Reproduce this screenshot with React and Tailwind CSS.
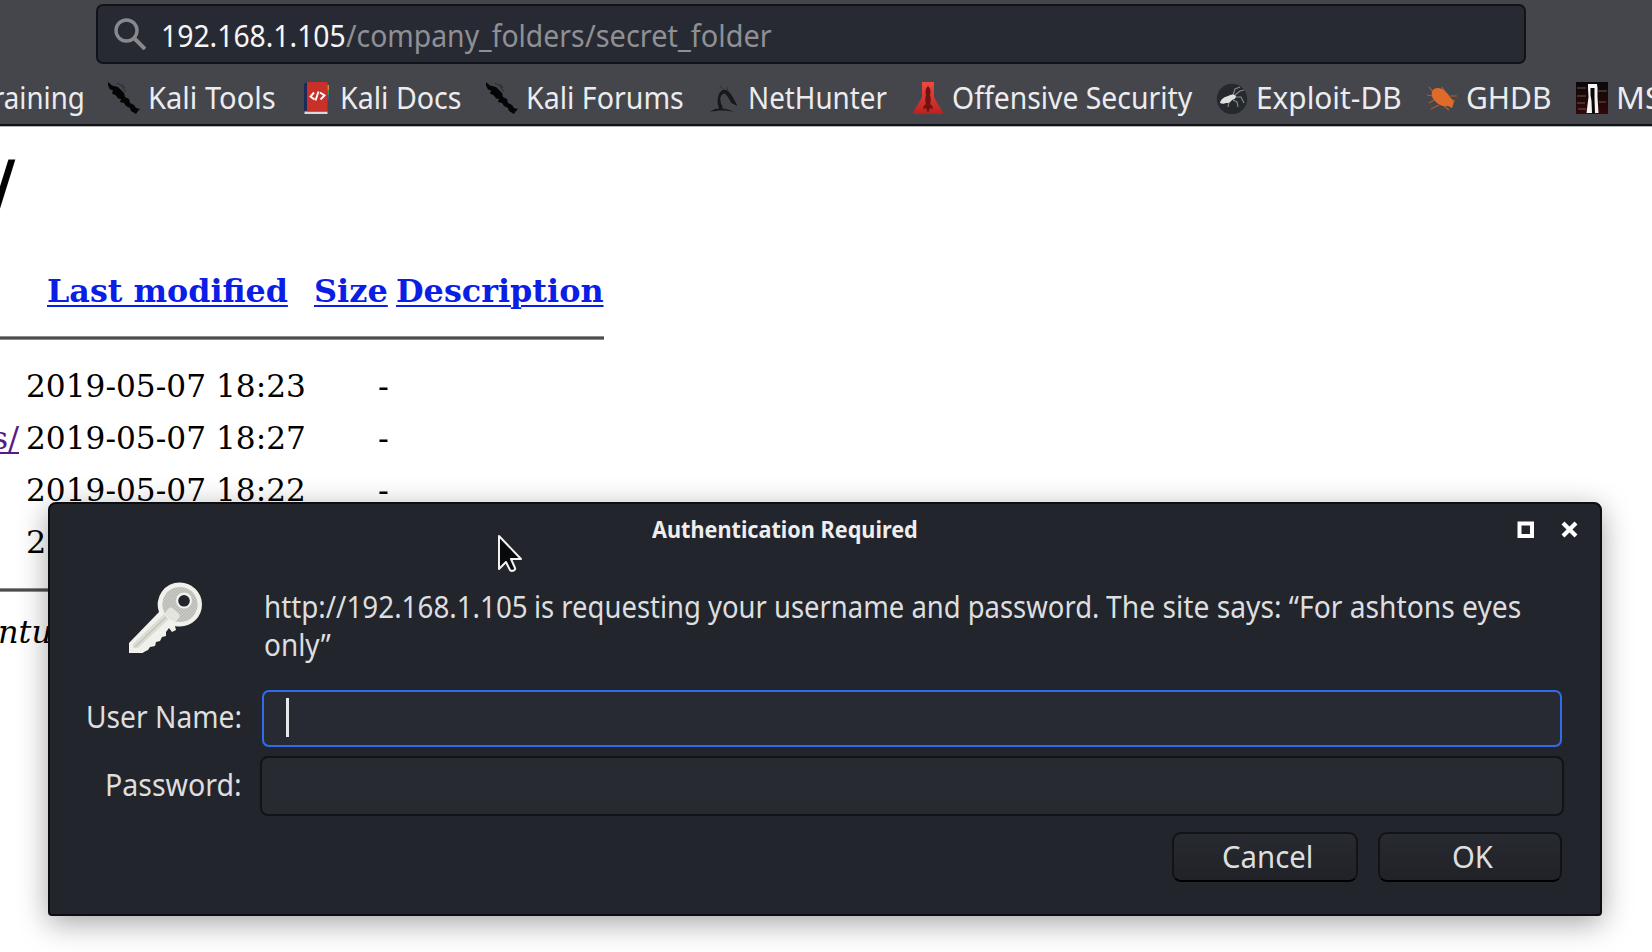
import { useLayoutEffect, useRef, useState } from 'react';

const sans = "font-['Noto_Sans',sans-serif]";
const serif = "font-['DejaVu_Serif',serif]";

/* Single line of text scaled horizontally to an exact width. */
function Fit({ w, className = '', textClass = '', children }) {
  const ref = useRef(null);
  const [k, setK] = useState(1);
  useLayoutEffect(() => {
    const natural = ref.current.offsetWidth;
    if (natural) setK(w / natural);
  }, [w]);
  return (
    <span className={`block shrink-0 ${className}`} style={{ width: w }}>
      <span
        ref={ref}
        className={`inline-block origin-left whitespace-nowrap ${textClass}`}
        style={{ transform: `scaleX(${k})` }}
      >
        {children}
      </span>
    </span>
  );
}

const DragonIcon = () => (
  <svg viewBox="0 0 32 32" className="h-8 w-8 shrink-0">
    <path d="M0 0l4 3.500 6 1.500 3 3 3 3 1 4 4 2 1 4 4 2 2 3 4 1-2 2-2 3-5-3-1-3-4-2-2-3-4-1 1-3-3-.5-2-3-4-2 1-3-3-1-2-4z" fill="#050506" />
    <path d="M9 1l5 3 4 6M14 2l3 4" stroke="#292b30" strokeWidth="1" fill="none" />
  </svg>
);
const DocsIcon = () => (
  <svg viewBox="0 0 32 32" className="h-8 w-8 shrink-0">
    <path d="M4 2l3-2v28l-3 2z" fill="#1c2a58" />
    <path d="M4.500 29.500h23v2.500h-23z" fill="#d9d9dc" />
    <path d="M7 0h20.500v29.500H7z" fill="#c93029" />
    <path d="M27.500 3H29v5h-1.500z" fill="#d98a2b" />
    <path d="M27.500 8H29v5h-1.500z" fill="#3c8a4a" />
    <path d="M27.500 13H29v5h-1.500z" fill="#3a5a9a" />
    <path d="M14 10.500l-3.500 4 4 3M20 10.500l4.500 3-4 4M18.500 9.500l-3 9" stroke="#fff" strokeWidth="1.900" fill="none" />
  </svg>
);
const HunterIcon = () => (
  <svg viewBox="0 0 32 32" className="h-8 w-8 shrink-0">
    <path d="M2 30c3-2.500 6-3.500 9-3.500-1-3.500-2-6.500-1-11 1-5 3-7 6-8 4 0 7 4 9.500 9l4 7.500-6-3-3-5c-2-3-3-4.500-4.500-4.500-3 1-4 4-3.500 8 .5 3 2 4 2 7 4 .5 8 1.500 12 3.500-8-2-17-2-24.500 0z" fill="#17181b" />
    <path d="M15 7l-3-3M20 8l-1-3" stroke="#2c2e32" strokeWidth="1" />
  </svg>
);
const FlaskIcon = () => (
  <svg viewBox="0 0 32 32" className="h-8 w-8 shrink-0">
    <defs>
      <linearGradient id="flask" x1="0" y1="0" x2="0" y2="1">
        <stop offset="0" stopColor="#ee4a43" />
        <stop offset="1" stopColor="#bd211d" />
      </linearGradient>
    </defs>
    <path d="M10 0h12v14c1 5 5 8 9.500 18H.5C5 22 9 19 10 14z" fill="url(#flask)" />
    <path d="M16 4c3 3 3 6 2 9 1 4 1 6 0 9 2 1 3 3 3 5l-3-1-2 5-2-5-3 1c0-2 1-4 3-5-1-3-1-5 0-9-1-3-1-6 2-9z" fill="#6f1210" />
  </svg>
);
const ExploitIcon = () => (
  <svg viewBox="0 0 32 32" className="h-8 w-8 shrink-0">
    <circle cx="16" cy="17" r="15.200" fill="#25282c" />
    <path d="M17 13l2-6 5-2M19 13l5-4 4-1M20 15l5 0 3 6M17 18l4 2 1 5M13 20l-1 5" stroke="#85878a" strokeWidth="1.200" fill="none" />
    <path d="M4 21c1-4 4-6 8-7 3-2 6-2 8 0 0 2-1 3-4 4-2 3-4 3-6 3-2 1-4 1-6 0z" fill="#dfe0e0" />
  </svg>
);
const GhdbIcon = () => (
  <svg viewBox="0 0 32 32" className="h-8 w-8 shrink-0">
    <path d="M7 10L3 5M7 14l-6-1M8 18l-5 3M13 23l-8 4M19 10l-3-5M24 14l7 0M24 17l5 2M18 24l5 4" stroke="#b55b2b" strokeWidth="1.200" fill="none" />
    <path d="M6 9c2-3 6-4 10-2 4 2 6 5 8 8l4 5-2 6-4-2c-5 1-9-1-12-4-3-3-5-5-4-11z" fill="#df6b2a" />
  </svg>
);
const MsfIcon = () => (
  <svg viewBox="0 0 32 32" className="h-8 w-8 shrink-0">
    <defs>
      <linearGradient id="msf" x1="0" y1="0" x2="0" y2="1">
        <stop offset="0" stopColor="#0a0808" />
        <stop offset="1" stopColor="#350707" />
      </linearGradient>
    </defs>
    <path d="M0 0h32v32H0z" fill="url(#msf)" />
    <path d="M1 6h9M22 9h9M1 14h9M1 21h8M23 20h7M2 27h8" stroke="#5b5353" strokeWidth="2" opacity=".55" />
    <path d="M12 2h9l.5 4v9l1 16H10.500l2-16-.5-9z" fill="#f5f5f5" />
    <path d="M14.500 6h4v10l.5 15h-3l-.5-12-1-6z" fill="#0b0808" />
  </svg>
);

const bookmarks = [
  { name: 'Kali Tools', Icon: DragonIcon, text: 128, box: 'w-[192px]' },
  { name: 'Kali Docs', Icon: DocsIcon, text: 122, box: 'w-[186px]' },
  { name: 'Kali Forums', Icon: DragonIcon, text: 158, box: 'w-[222px]' },
  { name: 'NetHunter', Icon: HunterIcon, text: 139, box: 'w-[204px]' },
  { name: 'Offensive Security', Icon: FlaskIcon, text: 240, box: 'w-[304px]' },
  { name: 'Exploit-DB', Icon: ExploitIcon, text: 146, box: 'w-[210px]' },
  { name: 'GHDB', Icon: GhdbIcon, text: 85, box: 'w-[150px]' },
  { name: 'MSFU', Icon: MsfIcon, text: 86, box: 'w-[150px]' },
];

function Toolbar() {
  return (
    <header className="h-[127px] border-b border-[#b5b5b7] bg-[#44464c] pt-1">
      <div className="ml-[96px] flex h-[60px] w-[1430px] items-center rounded-[7px] border-2 border-[#121317] bg-[#282a33] pl-4 text-[30px] leading-10">
        <svg viewBox="0 0 32 32" className="h-8 w-8 shrink-0">
          <circle cx="12.500" cy="12.500" r="10.500" fill="none" stroke="#88898c" strokeWidth="3.400" />
          <path d="M20 20l11 11" stroke="#88898c" strokeWidth="4" />
        </svg>
        <Fit w={185} className="ml-[15px] pt-[3px] text-[#f6f6f7]">192.168.1.105</Fit>
        <Fit w={239} className="pt-[3px] text-[#8e9095]">/company_folders</Fit>
        <Fit w={187} className="pt-[3px] text-[#8e9095]">/secret_folder</Fit>
      </div>
      <nav className="flex h-[62px] items-start overflow-hidden border-b-2 border-[#111216] pt-3 text-[30px] leading-10 text-[#ececee]">
        <div className="flex w-[108px] shrink-0 justify-end pr-[23px] pt-[2px]">
          <Fit w={106}>Training</Fit>
        </div>
        {bookmarks.map(({ name, Icon, text, box }) => (
          <div key={name} className={`flex shrink-0 ${box}`}>
            <span className="flex h-[44px] w-[40px] shrink-0 items-center">
              <Icon />
            </span>
            <Fit w={text} className="pt-[2px]">{name}</Fit>
          </div>
        ))}
      </nav>
    </header>
  );
}

const rows = [
  { name: '', date: '2019-05-07 18:23' },
  { name: 's/', date: '2019-05-07 18:27' },
  { name: '', date: '2019-05-07 18:22' },
  { name: '', date: '2' },
];

const link = 'underline decoration-2 underline-offset-[3px]';

function Listing() {
  return (
    <main className={`h-[825px] overflow-hidden bg-white text-[32px] leading-[52px] text-black ${serif}`}>
      <h1 className="h-[138px] pt-[12px] text-[64px] font-bold leading-[90px]">
        <span className="-ml-[8px] inline-block">/</span>
      </h1>
      <div className="flex h-[71px] pl-[47px] font-bold text-[#0a1ee6]">
        <Fit w={241} textClass={link} className="mr-[26px]">Last modified</Fit>
        <Fit w={74} textClass={link} className="mr-2">Size</Fit>
        <Fit w={208} textClass={link}>Description</Fit>
      </div>
      <hr className="mb-[20px] h-1 w-[604px] border-t border-b border-[#8d8d8d] bg-[#4e4e4e]" />
      {rows.map((r) => (
        <div key={r.date} className="flex h-[52px]">
          <div className={`flex w-[19px] shrink-0 justify-end text-[#551a8b] ${link}`}>{r.name}</div>
          {r.date.length > 1 ? (
            <>
              <Fit w={280} className="ml-[7px]">{r.date}</Fit>
              <span className="ml-[72px]">-</span>
            </>
          ) : (
            <span className="ml-[7px]">{r.date}</span>
          )}
        </div>
      ))}
      <hr className="mt-[20px] h-1 w-[604px] border-t border-b border-[#8d8d8d] bg-[#4e4e4e]" />
      <address className="-ml-[2px] pt-[14px]">ntu</address>
    </main>
  );
}

const KeyIcon = () => (
  <svg viewBox="0 0 74 71" className="h-[71px] w-[74px]">
    <defs>
      <pattern id="grain" width="3" height="3" patternUnits="userSpaceOnUse">
        <path d="M0 0h3v3H0z" fill="#cfd0cb" />
        <path d="M0 0h1.500v1.500H0zM1.500 1.500H3V3H1.500z" fill="#b4b5b1" />
      </pattern>
    </defs>
    <path
      fillRule="evenodd"
      d="M52 .5a22 22 0 0 1 0 44c-2 0-3.500 0-5-.5l1 4-4 2-3-4-3 4v4l-4 1-2 4-4 1-1 4-5 1-2 3-4 2-2 1.500H1V61l30-31A22 22 0 0 1 52 .5zM56 13a5.800 5.800 0 1 0 0 11.600 5.800 5.800 0 0 0 0-11.600z"
      fill="#f1f1ec"
    />
    <path
      fillRule="evenodd"
      d="M52 5a17.500 17.500 0 1 1-8 33l-8-8A17.500 17.500 0 0 1 52 5zM56 10.500a8 8 0 1 0 0 16 8 8 0 0 0 0-16z"
      fill="url(#grain)"
    />
    <path d="M5 62l31-30 5 5-31 29H5z" fill="#dcddd5" />
    <path d="M7 65l31-30" stroke="#c4c5bd" strokeWidth="1.500" />
    <rect x="38" y="28" width="14" height="9" rx="3.500" transform="rotate(42 45 32)" fill="#e4e5df" />
  </svg>
);

const button =
  'flex h-[50px] items-center justify-center rounded-[9px] border-2 border-[#121317] border-b-black bg-linear-to-b from-[#282a31] to-[#202228]';

function Dialog() {
  return (
    <section
      role="dialog"
      className="absolute left-[48px] top-[502px] h-[414px] w-[1554px] rounded-t-[8px] rounded-b-[4px] border-2 border-[#0d0e12] bg-[#23252d] text-[30px] leading-[38px] text-[#dddedf] shadow-[0_7px_30px_rgba(0,0,0,0.36)]"
    >
      <div className="flex h-[50px] items-center pr-[21px]">
        <div className="flex grow pl-[602px] text-[24px] font-bold text-[#eeeeef]">
          <Fit w={266}>Authentication Required</Fit>
        </div>
        <svg viewBox="0 0 62 17" className="h-[17px] w-[62px]">
          <path d="M2.500 2.500h12.500v12.500H2.500z" fill="none" stroke="#fff" strokeWidth="4" />
          <path d="M46 2l13 13M59 2L46 15" stroke="#fff" strokeWidth="4.200" />
        </svg>
      </div>
      <div className="flex h-[135px] pt-[28px]">
        <div className="ml-[78px] w-[136px] shrink-0">
          <KeyIcon />
        </div>
        <div className="pt-[6px]">
          <div className="flex">
            <Fit w={264} className="mr-[6px]">http://192.168.1.105</Fit>
            <Fit w={565} className="mr-[7px]">is requesting your username and password.</Fit>
            <Fit w={415}>The site says: “For ashtons eyes</Fit>
          </div>
          <Fit w={67}>only”</Fit>
        </div>
      </div>
      <div className="flex h-[60px] items-start pt-px">
        <div className="flex w-[194px] shrink-0 justify-end pr-[2px] pt-[8px]">
          <Fit w={156}>User Name:</Fit>
        </div>
        <div className="ml-[18px] flex h-[57px] w-[1300px] items-center rounded-[7px] border-[2.500px] border-[#2f6de8] bg-[#282a33] pb-[2px] pl-[22px]">
          <span className="h-[39px] w-[3px] bg-[#e8e8ea]" />
        </div>
      </div>
      <div className="mt-[7px] flex h-[60px] items-start">
        <div className="flex w-[194px] shrink-0 justify-end pr-[2px] pt-[10px]">
          <Fit w={137}>Password:</Fit>
        </div>
        <div className="ml-4 h-[60px] w-[1304px] rounded-[8px] border-2 border-[#121317] bg-[#282a31]" />
      </div>
      <div className="mt-[16px] flex justify-end gap-5 pr-[38px]">
        <button className={`w-[186px] pl-[4px] ${button}`}>
          <Fit w={91}>Cancel</Fit>
        </button>
        <button className={`w-[184px] pl-[4px] ${button}`}>
          <Fit w={41}>OK</Fit>
        </button>
      </div>
    </section>
  );
}

export default function App() {
  return (
    <div className={`relative h-[952px] w-[1652px] overflow-hidden ${sans}`}>
      <Toolbar />
      <Listing />
      <Dialog />
      <svg viewBox="0 0 26 40" className="absolute left-[497px] top-[533px] h-[40px] w-[26px]">
        <path d="M2 3v33l7-7 4 8c2 2 6 0 5-2l-4-9h10z" fill="#08090b" stroke="#f2f2f2" strokeWidth="2" strokeLinejoin="round" />
      </svg>
    </div>
  );
}
